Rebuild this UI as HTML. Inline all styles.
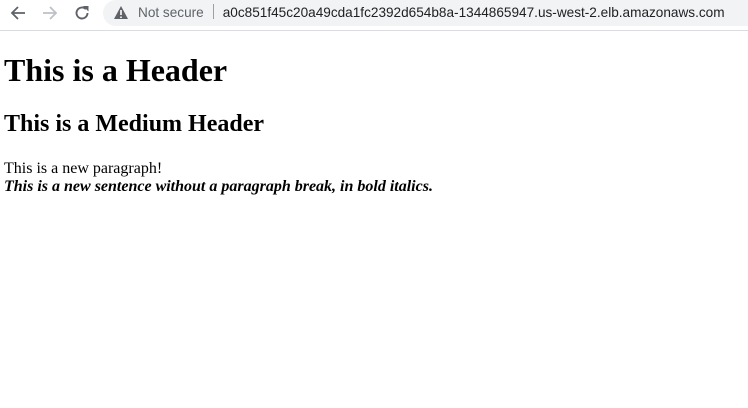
<!DOCTYPE html>
<html><head><style>
html,body{margin:0;padding:0;background:#fff;width:748px;height:408px;overflow:hidden}
.bar{position:absolute;left:0;top:0;width:748px;height:30px;background:#fff;border-bottom:1px solid #dadce0}
.omni{position:absolute;left:103px;top:0;width:660px;height:26px;background:#f1f3f4;border-radius:13px}
.url{position:absolute;left:138px;top:4px;font:13.6px "Liberation Sans",Arial,sans-serif;color:#202124;white-space:nowrap}
.ns{color:#5f6368}
.sep{display:inline-block;width:1px;height:15px;background:#9aa0a6;margin:0 9px -2px 9px}
.content{position:absolute;top:31px;left:0;right:0;padding:0 4px;font-family:"Liberation Serif","Times New Roman",serif;color:#000}
h1{font-size:32px;margin:21.4px 0}
h2{font-size:24px;margin:19.9px 0}
p{font-size:16px;margin:20px 0;padding-top:2px;line-height:18px}
</style></head><body>
<div class="bar">
<svg style="position:absolute;left:8px;top:3px" width="20" height="20" viewBox="0 0 20 20"><path d="M17 10H4M10 4l-6 6 6 6" stroke="#5f6368" stroke-width="1.8" fill="none"/></svg>
<svg style="position:absolute;left:40px;top:3px" width="20" height="20" viewBox="0 0 20 20"><path d="M3 10h13M10 4l6 6-6 6" stroke="#bdc1c6" stroke-width="1.8" fill="none"/></svg>
<svg style="position:absolute;left:72px;top:3px" width="20" height="20" viewBox="0 0 20 20"><path d="M15.5 10a5.5 5.5 0 1 1-1.6-3.9" stroke="#5f6368" stroke-width="1.9" fill="none"/><path d="M11 3h5.5v5.5z" fill="#5f6368"/></svg>
<div class="omni"></div>
<svg style="position:absolute;left:113px;top:5px" width="16" height="15" viewBox="0 0 16 15"><path d="M8 1L15 14H1z" fill="#5f6368"/><path d="M8 5v5M8 11.5v1.5" stroke="#fff" stroke-width="1.6"/></svg>
<div class="url"><span class="ns">Not secure</span><span class="sep"></span>a0c851f45c20a49cda1fc2392d654b8a-1344865947.us-west-2.elb.amazonaws.com</div>
</div>
<div class="content">
<h1>This is a Header</h1>
<h2>This is a Medium Header</h2>
<p>This is a new paragraph!<br><b><i>This is a new sentence without a paragraph break, in bold italics.</i></b></p>
</div>
</body></html>
